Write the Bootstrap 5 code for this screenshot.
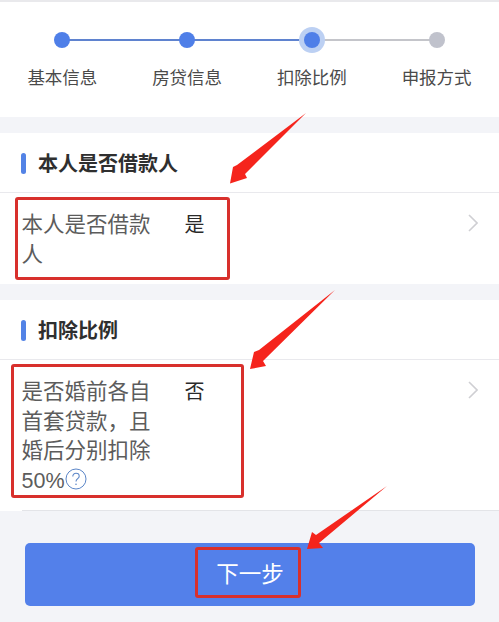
<!DOCTYPE html>
<html lang="zh">
<head>
<meta charset="utf-8">
<title>扣除比例</title>
<link href="https://cdn.jsdelivr.net/npm/bootstrap@5.3.0/dist/css/bootstrap.min.css" rel="stylesheet">
<style>
html,body{height:622px;overflow:hidden}
body{background:#f3f4f8;font-family:"Liberation Sans","Noto Sans CJK SC",sans-serif;position:relative;padding-top:2px}
.stepper{background:#fff;height:115px;padding-top:27px}
.step-col{flex:1 1 0;display:flex;flex-direction:column;align-items:center;position:relative}
.step-dot{width:16px;height:16px;border-radius:50%;background:#4f7fe8;margin:3px 0;position:relative;z-index:1}
.step-dot.now{box-shadow:0 0 0 5px #bcd0f3}
.step-dot.todo{background:#c0c2cc}
.step-col::after{content:"";position:absolute;left:50%;width:100%;top:10px;height:2px;background:#5f83cf}
.step-col.rest::after{background:#c4c5ca}
.step-col:last-child::after{display:none}
.step-name{font-size:17.5px;line-height:24px;color:#4a4a4a;margin-top:15px;white-space:nowrap}
.sect{background:#fff;margin-top:16px}
.sect-head{height:60px;padding-left:21px;padding-top:2px;border-bottom:1px solid #e9e9ed}
.sect-mark{width:5px;height:21px;border-radius:3px;background:#5383e6;margin-right:12px}
.sect-name{font-size:20px;font-weight:700;color:#2f2f2f;line-height:1}
.sect-row{padding-left:21.5px}
.row-inner{display:flex;align-items:flex-start;padding-right:21px}
.row-a{padding-top:18px;padding-bottom:14px}
.row-b{padding-top:18px;padding-bottom:14px;border-bottom:1px solid #e3e4e8}
.row-label{width:129.5px;font-size:21.5px;line-height:29.5px;color:#5c5c5c}
.row-value{margin-left:33.5px;font-size:20px;line-height:29px;color:#2a2a2a}
.row-chev{margin-left:auto;margin-top:3px}
.help-ic{vertical-align:-2px}
.next-wrap{padding:32px 24px 0 25px}
.next-btn{background:#5380ea;border:0;color:#fff;height:63px;font-size:22.5px;border-radius:5px;width:100%;padding:0;--bs-btn-hover-bg:#5380ea;--bs-btn-hover-color:#fff}
.mark-box{position:absolute;border:3px solid #d8302c;border-radius:3px;pointer-events:none}
.box-a{left:15px;top:197px;width:215px;height:83px}
.box-b{left:11px;top:364px;width:233px;height:134px}
.box-c{left:195px;top:547px;width:106px;height:51px}
.arrow-layer{position:absolute;left:0;top:0;width:499px;height:622px;pointer-events:none}
.top-band{position:absolute;left:0;top:0;width:100%;height:2px;background:#e9e9ec}
</style>
</head>
<body>
<div class="top-band"></div>
<div class="stepper d-flex">
  <div class="step-col"><div class="step-dot"></div><div class="step-name">基本信息</div></div>
  <div class="step-col"><div class="step-dot"></div><div class="step-name">房贷信息</div></div>
  <div class="step-col rest"><div class="step-dot now"></div><div class="step-name">扣除比例</div></div>
  <div class="step-col"><div class="step-dot todo"></div><div class="step-name">申报方式</div></div>
</div>

<section class="sect">
  <div class="sect-head d-flex align-items-center"><span class="sect-mark"></span><span class="sect-name">本人是否借款人</span></div>
  <div class="sect-row">
    <div class="row-inner row-a">
      <div class="row-label">本人是否借款人</div>
      <div class="row-value">是</div>
      <svg class="row-chev" width="10" height="18" viewBox="0 0 10 18"><path d="M1 1l8 8-8 8" fill="none" stroke="#cfcfd3" stroke-width="1.6"/></svg>
    </div>
  </div>
</section>

<section class="sect">
  <div class="sect-head d-flex align-items-center"><span class="sect-mark"></span><span class="sect-name">扣除比例</span></div>
  <div class="sect-row">
    <div class="row-inner row-b">
      <div class="row-label">是否婚前各自首套贷款，且婚后分别扣除50%<svg class="help-ic" width="22" height="22" viewBox="0 0 22 22"><circle cx="11" cy="11" r="10" fill="none" stroke="#5b86c8" stroke-width="1"/><path d="M7.8 8.400c0-1.900 1.400-3.100 3.200-3.100s3.200 1.200 3.200 2.900c0 2.400-3.200 2.500-3.200 5.300" fill="none" stroke="#5b86c8" stroke-width="1.100"/><circle cx="11" cy="16.300" r=".8" fill="#5b86c8"/></svg></div>
      <div class="row-value">否</div>
      <svg class="row-chev" width="10" height="18" viewBox="0 0 10 18"><path d="M1 1l8 8-8 8" fill="none" stroke="#cfcfd3" stroke-width="1.600"/></svg>
    </div>
  </div>
</section>

<div class="next-wrap"><button type="button" class="btn next-btn">下一步</button></div>

<div class="mark-box box-a"></div>
<div class="mark-box box-b"></div>
<div class="mark-box box-c"></div>
<svg class="arrow-layer" viewBox="0 0 499 622">
  <g fill="#f5241c">
    <polygon points="306,113 245,174 247,178 230,183.500 233,167 237,165"/>
    <polygon points="335,290 263,361 266,366 250,369 254,352 259,350"/>
    <polygon points="387,486 319,543 323,548 307,549 312,532 316,535"/>
  </g>
</svg>
<script src="https://cdn.jsdelivr.net/npm/bootstrap@5.3.0/dist/js/bootstrap.bundle.min.js"></script>
</body>
</html>
